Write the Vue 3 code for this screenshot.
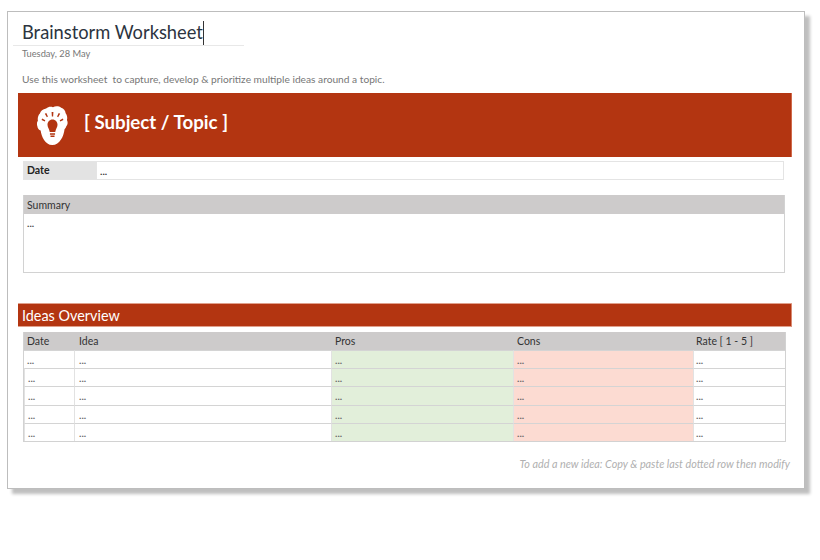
<script setup>
const rows = [1, 2, 3, 4, 5]
</script>

<template>
  <div class="stage">
    <main class="page">
      <header class="head">
        <div class="title-wrap">
          <h1 class="title">Brainstorm Worksheet<span class="caret"></span></h1>
        </div>
        <div class="date">Tuesday, 28 May</div>
      </header>
      <p class="intro">Use this worksheet&nbsp; to capture, develop &amp; prioritize multiple ideas around a topic.</p>

      <section class="banner">
        <svg class="icon" viewBox="0 0 34 40" width="31" height="40" preserveAspectRatio="none">
          <path fill="#fff" d="M10 2.500C12.500.6 15 .4 17.500 1.200 20-.1 24-.2 26.500 1.800c2.700.6 4.600 2.700 4.900 5.400 1.600 2 2.200 4.600 1.400 6.800 1.200 2 1 4.600-.6 6.100-.3 1.300-1 2.400-2 3.100-.8 6.600-5 15.800-13.500 15.800C9 39 4.800 30.600 4 24.500c-1.900-.6-3.400-2.300-3.600-4.300C-.5 18.500-.2 16.200 1 14.800.4 12 1.300 9.300 3.200 7.600 3.800 5 6.500 3 10 2.500Z"/>
          <path fill="#b33511" d="M17 13.500c-3.300 0-5.500 2.500-5.500 5.300 0 2.700 1.800 3.800 2.500 7.200h6c.7-3.400 2.500-4.500 2.500-7.200 0-2.800-2.200-5.300-5.500-5.300ZM14.200 27.200h5.600v1.500h-5.600ZM14.800 29.500h4.400v1.500h-4.400ZM16 6h2l-.3 4.500h-1.400ZM8.600 7.800l1.600-.8 1.800 3.600-1.200.6ZM25.400 7.800l-1.600-.8-1.800 3.600 1.200.6ZM5 14l.7-1.500 3.400 1.700-.6 1.200ZM29 14l-.7-1.500-3.400 1.700.6 1.200Z"/>
        </svg>
        <h2 class="subject">[ Subject / Topic ]</h2>
      </section>

      <div class="date-row">
        <div class="date-label">Date</div>
        <div class="date-value">...</div>
      </div>

      <section class="summary">
        <div class="summary-head">Summary</div>
        <div class="summary-body">...</div>
      </section>

      <h2 class="overview">Ideas Overview</h2>

      <section class="ideas">
        <div class="th">Date</div>
        <div class="th col-idea">Idea</div>
        <div class="th col-mid">Pros</div>
        <div class="th col-mid">Cons</div>
        <div class="th col-rate">Rate [ 1 - 5 ]</div>
        <template v-for="r in rows" :key="r">
          <div class="td">...</div>
          <div class="td col-idea">...</div>
          <div class="td pro">...</div>
          <div class="td con">...</div>
          <div class="td col-rate">...</div>
        </template>
      </section>

      <p class="note">To add a new idea: Copy &amp; paste last dotted row then modify</p>
    </main>
  </div>
</template>

<style scoped>
.stage {
  width: 820px;
  height: 560px;
  padding: 11px 0 0 7px;
  box-sizing: border-box;
  background: #fff;
  font-family: Lato, "Liberation Sans", sans-serif;
  overflow: hidden;
}
.page {
  width: 798px;
  height: 478px;
  box-sizing: border-box;
  border: 1px solid #bdbdbd;
  box-shadow: 5px 5px 3px #bfbfbf;
  background: #fff;
  padding: 0 10px;
}
.head { padding-left: 4px; }
.title-wrap {
  width: 231px;
  margin-left: -9px;
  height: 33px;
  border-bottom: 1px solid #e8e8e8;
}
.title {
  margin: 0;
  padding: 7px 0 0 9px;
  font-size: 18.300px;
  line-height: 26px;
  font-weight: 400;
  color: #2c3440;
  white-space: nowrap;
}
.caret {
  display: inline-block;
  width: 1px;
  height: 24px;
  background: #333;
  vertical-align: -6px;
}
.date {
  margin: 2px 0 0;
  font-size: 9.300px;
  line-height: 12px;
  color: #777;
}
.intro {
  margin: 12px 0 0 4px;
  font-size: 10.200px;
  line-height: 14px;
  color: #777;
  white-space: nowrap;
}
.banner {
  margin-top: 7px;
  width: 774px;
  height: 64px;
  background: #b33511;
  border-right: 1px solid #d0694a;
  display: flex;
  align-items: center;
  padding-left: 19px;
  box-sizing: border-box;
}
.icon { flex: none; margin-top: 1px; }
.subject {
  margin: 0 0 6px 16px;
  color: #fff;
  font-size: 18.700px;
  font-weight: 700;
  line-height: 24px;
  white-space: nowrap;
}
.date-row {
  margin: 4px 0 0 5px;
  width: 761px;
  height: 19px;
  box-sizing: border-box;
  display: flex;
  border: 1px solid #e4e4e4;
}
.date-label {
  width: 72px;
  background: #e3e3e3;
  font-size: 10.500px;
  font-weight: 700;
  line-height: 17px;
  padding-left: 3px;
  box-sizing: border-box;
  color: #222;
}
.date-value {
  flex: 1;
  border-left: 1px solid #e4e4e4;
  padding-left: 3px;
  font-size: 10px;
  line-height: 18px;
  font-weight: 700;
  color: #333;
}
.summary {
  margin: 15px 0 0 5px;
  width: 762px;
  height: 78px;
  box-sizing: border-box;
  border: 1px solid #d2d2d2;
  border-top: 0;
}
.summary-head {
  height: 19px;
  background: #cdcbcb;
  font-size: 10.500px;
  line-height: 20px;
  padding-left: 3px;
  color: #333;
}
.summary-body {
  padding: 2px 0 0 3px;
  font-size: 10px;
  line-height: 14px;
  font-weight: 700;
  color: #444;
}
.overview {
  margin: 31px 0 0;
  width: 774px;
  height: 23px;
  box-sizing: border-box;
  padding-left: 4px;
  background: #b33511;
  border-right: 1px solid #d98a72;
  border-bottom: 1px solid #e0a08c;
  box-shadow: 0 -1px 0 #e0a08c;
  color: #fff;
  font-size: 14.400px;
  line-height: 24px;
  font-weight: 400;
}
.ideas {
  margin: 5px 0 0 5px;
  width: 763px;
  display: grid;
  grid-template-columns: 50px 257px 182px 180px 92px;
  grid-template-rows: 18px 18px 18px 19px 18px 18px;
  border-bottom: 1px solid #d2d2d2;
  border-right: 1px solid #d2d2d2;
  border-left: 1px solid #d2d2d2;
  box-sizing: border-box;
}
.th {
  background: #cdcbcb;
  font-size: 10.500px;
  line-height: 18px;
  padding-left: 3px;
  color: #333;
}
.th.col-idea { padding-left: 5px; }
.th.col-mid { padding-left: 4px; }
.th.col-rate { padding-left: 3px; }
.td {
  box-sizing: border-box;
  font-size: 10px;
  line-height: 18px;
  padding-left: 3px;
  font-weight: 700;
  color: #666;
  border-top: 1px solid #d4d4d4;
}
.td + .td { border-left: 1px solid #e2e2e2; }
.td.col-idea { padding-left: 4px; }
.td.col-rate { padding-left: 2px; }
.pro { background: #e2efda; }
.con { background: #fcdbd2; }
.note {
  margin: 15px 0 0;
  width: 772px;
  text-align: right;
  font-size: 10.800px;
  line-height: 14px;
  font-style: italic;
  color: #b0b0b0;
  white-space: nowrap;
}
</style>

<style>
html, body { margin: 0; background: #fff; }
</style>
